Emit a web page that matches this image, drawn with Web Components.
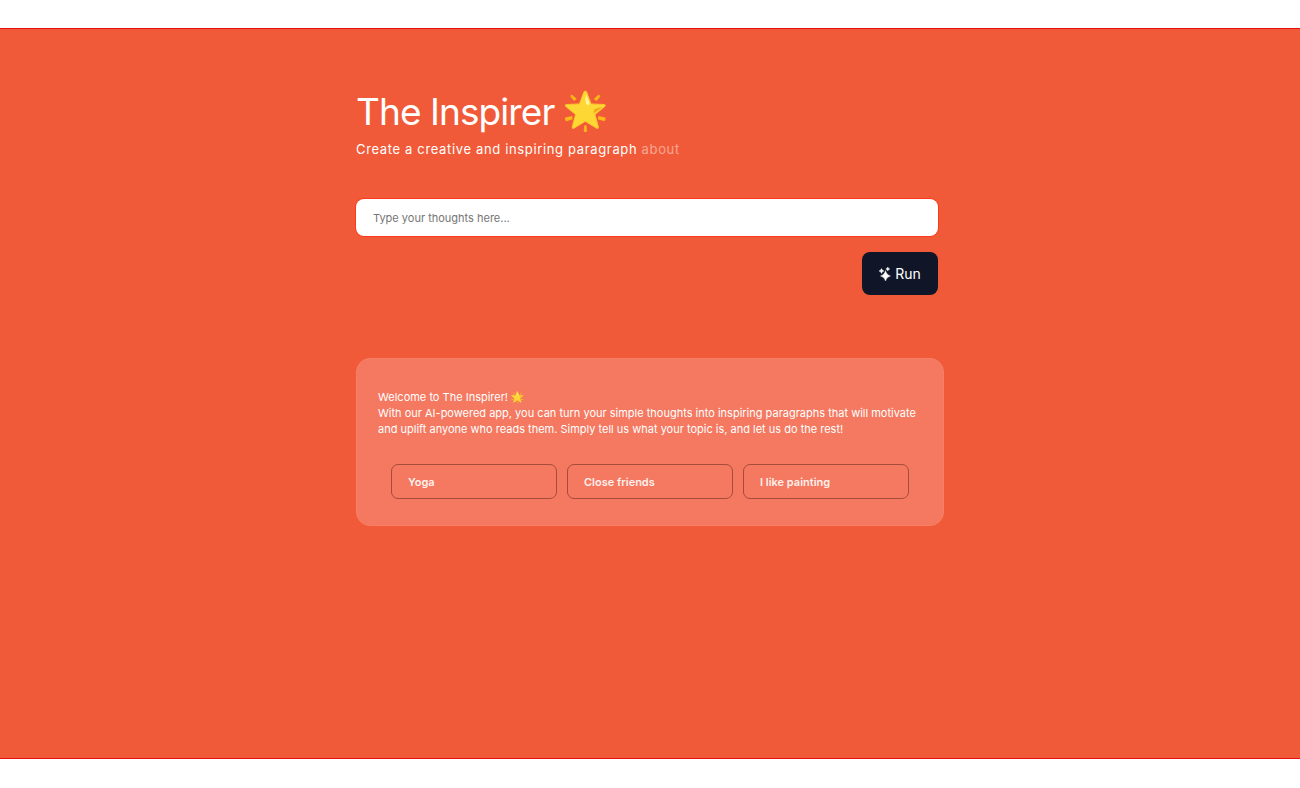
<!DOCTYPE html>
<html lang="en">
<head>
  <meta charset="utf-8">
  <meta name="viewport" content="width=device-width, initial-scale=1">
  <title>The Inspirer</title>
  <style>
    body {
      margin: 0;
      background-color: #fff;
      color: #fff;
      font-family: Inter, "Liberation Sans", sans-serif;
      font-size: 11px;
      line-height: 16px;
    }
  </style>
</head>
<body>
  <app-shell>
    <page-header>
      The Inspirer <glowing-star></glowing-star>
      <span slot="subtitle">Create a creative and inspiring paragraph</span>
      <span slot="topic">about</span>
    </page-header>
    <prompt-form placeholder="Type your thoughts here..."></prompt-form>
    <welcome-card>
      <span slot="greeting">Welcome to The Inspirer! <glowing-star></glowing-star></span>
      With our AI-powered app, you can turn your simple thoughts into inspiring paragraphs that will motivate and uplift anyone who reads them. Simply tell us what your topic is, and let us do the rest!
      <topic-button slot="topics">Yoga</topic-button>
      <topic-button slot="topics">Close friends</topic-button>
      <topic-button slot="topics">I like painting</topic-button>
    </welcome-card>
  </app-shell>

  <script>
    // Builds the shadow root from a string of styles and markup
    class BaseElement extends HTMLElement {
      constructor () {
        super()
        this.attachShadow({ mode: 'open' })
        this.shadowRoot.innerHTML = this.constructor.markup
      }
    }

    // Coloured band with the centred content column
    class AppShell extends BaseElement {
      static markup = `
      <style>
        :host {
          box-sizing: border-box;
          min-height: 100vh;
          padding: 28px 0 29px;
          display: flex;
        }

        main {
          flex: 1;
          box-sizing: border-box;
          padding: 60px 16px;
          background-color: #f15a38;
          border: solid #e8100c;
          border-width: 1px 0;
        }

        .column {
          max-width: 588px;
          margin: 0 auto;
        }
      </style>
      <main>
        <div class="column"><slot></slot></div>
      </main>`
    }

    // The star is sized by the text that it stands in
    class GlowingStar extends BaseElement {
      static markup = `
      <style>
        :host {
          display: inline-block;
          width: 1.15em;
          height: 1.15em;
          vertical-align: -0.2em;
        }

        svg {
          display: block;
          width: 100%;
          height: 100%;
        }
      </style>
      <svg viewBox="0 0 44 44" role="img" aria-label="Glowing star">
        <g fill="#fdb717">
          <path d="M8.4 4.8 13.2 9.2 10.4 11.4 6.4 6.4Q6.6 4.8 8.4 4.8z"/>
          <path d="M35.6 4.8 30.8 9.2 33.6 11.4 37.6 6.4Q37.4 4.8 35.6 4.8z"/>
          <path d="M1.2 28.4 8.4 27 9 30.2 2.4 32.2Q.6 31 1.2 28.4z"/>
          <path d="M42.8 28.4 35.6 27 35 30.2 41.6 32.2Q43.4 31 42.8 28.4z"/>
          <path d="M20.4 43 21 36.4h2.2L23.8 43Q22 44 20.4 43z"/>
        </g>
        <path fill="#fdd835" stroke="#fdc52c" stroke-width="1" stroke-linejoin="round" d="M22 1.2Q23 .8 23.6 2.4L28 14.4 41.6 15Q43.6 15.4 42.2 17L32 25.4 35.6 38.4Q35.6 40.4 33.8 39.6L22 32.4 10.2 39.6Q8.4 40.4 8.4 38.4L12 25.4 1.8 17Q.4 15.4 2.4 15L16 14.4 20.4 2.4Q21 .8 22 1.2z"/>
        <path fill="#fff59d" d="M23 4Q24.2 9 26.4 13.2 26.2 16 24 15.4 22.2 14.6 22.2 9z"/>
        <path fill="#f4a81d" d="M40 17.6 30.6 24.2Q30.2 21 31.6 19.8 34 18.4 40 17.6z"/>
      </svg>`
    }

    class PageHeader extends BaseElement {
      static markup = `
      <style>
        :host {
          display: block;
          margin-bottom: 40px;
        }

        h1 {
          margin: 0 0 4px;
          font-size: 37px;
          font-weight: 400;
          line-height: 46px;
          letter-spacing: -0.025em;
        }

        p {
          margin: 0;
          font-size: 13px;
          line-height: 20px;
          letter-spacing: 0.05em;
        }

        .topic {
          opacity: 0.45;
        }
      </style>
      <h1><slot></slot></h1>
      <p><slot name="subtitle"></slot> <span class="topic"><slot name="topic"></slot></span></p>`
    }

    class PromptForm extends BaseElement {
      static markup = `
      <style>
        :host {
          display: block;
          margin-bottom: 63px;
          padding-right: 6px;
        }

        form {
          display: flex;
          flex-direction: column;
          gap: 16px;
        }

        input {
          box-sizing: border-box;
          width: 100%;
          height: 37px;
          padding: 0 17px;
          border: none;
          border-radius: 8px;
          background-color: #fff;
          box-shadow: 0 0 0 1px #fa3a18;
          color: #101627;
          font: inherit;
        }

        input::placeholder {
          color: #757575;
          opacity: 1;
        }

        button {
          display: flex;
          align-items: center;
          justify-content: center;
          gap: 4px;
          align-self: flex-end;
          width: 76px;
          height: 43px;
          padding: 0;
          border: none;
          border-radius: 8px;
          background-color: #101627;
          color: #fff;
          font: inherit;
          font-size: 14px;
          cursor: pointer;
        }

        svg {
          width: 12px;
          height: 14px;
        }
      </style>
      <form>
        <input type="text" aria-label="Your thoughts">
        <button type="submit">
          <svg viewBox="0 0 12 14" fill="#fff" aria-hidden="true">
            <path d="M6.5 3.6Q7.4 8 11.5 9 7.4 10 6.5 14 5.6 10 1.5 9 5.6 8 6.5 3.6z" stroke="#fff" stroke-width=".4"/>
            <path d="M2.5 1.6Q3 3.5 5 4 3 4.5 2.5 6.4 2 4.5 0 4 2 3.5 2.5 1.6z" stroke="#fff" stroke-width=".4"/>
            <path d="M8.8 0Q9.2 1.6 10.8 2 9.2 2.4 8.8 4 8.4 2.4 6.8 2 8.4 1.6 8.8 0z" stroke="#fff" stroke-width=".4"/>
          </svg>
          Run
        </button>
      </form>`

      connectedCallback () {
        this.input = this.shadowRoot.querySelector('input')
        this.input.placeholder = this.getAttribute('placeholder')
        this.shadowRoot.querySelector('form').addEventListener('submit', (event) => {
          event.preventDefault()
        })
      }

      set value (text) {
        this.input.value = text
        this.input.focus()
      }
    }

    class WelcomeCard extends BaseElement {
      static markup = `
      <style>
        :host {
          display: block;
          box-sizing: border-box;
          padding: 30px 21px 26px;
          border: 1px solid #f58066;
          border-radius: 14px;
          background-color: #f57860;
        }

        p {
          margin: 0;
        }

        .topics {
          display: grid;
          grid-template-columns: repeat(auto-fit, minmax(140px, 1fr));
          gap: 10px;
          margin-top: 27px;
          padding: 0 13px;
        }
      </style>
      <p><slot name="greeting"></slot></p>
      <p><slot></slot></p>
      <div class="topics"><slot name="topics"></slot></div>`
    }

    // Suggested topic, a click puts it into the prompt
    class TopicButton extends BaseElement {
      static markup = `
      <style>
        :host {
          display: block;
        }

        button {
          box-sizing: border-box;
          width: 100%;
          height: 35px;
          padding: 0 16px;
          border: 1px solid #a54c3b;
          border-radius: 7px;
          background-color: transparent;
          color: #fff0ec;
          font: inherit;
          font-weight: 600;
          text-align: left;
          cursor: pointer;
        }
      </style>
      <button type="button"><slot></slot></button>`

      connectedCallback () {
        this.addEventListener('click', () => {
          document.querySelector('prompt-form').value = this.textContent
        })
      }
    }

    customElements.define('app-shell', AppShell)
    customElements.define('glowing-star', GlowingStar)
    customElements.define('page-header', PageHeader)
    customElements.define('prompt-form', PromptForm)
    customElements.define('welcome-card', WelcomeCard)
    customElements.define('topic-button', TopicButton)
  </script>
</body>
</html>
